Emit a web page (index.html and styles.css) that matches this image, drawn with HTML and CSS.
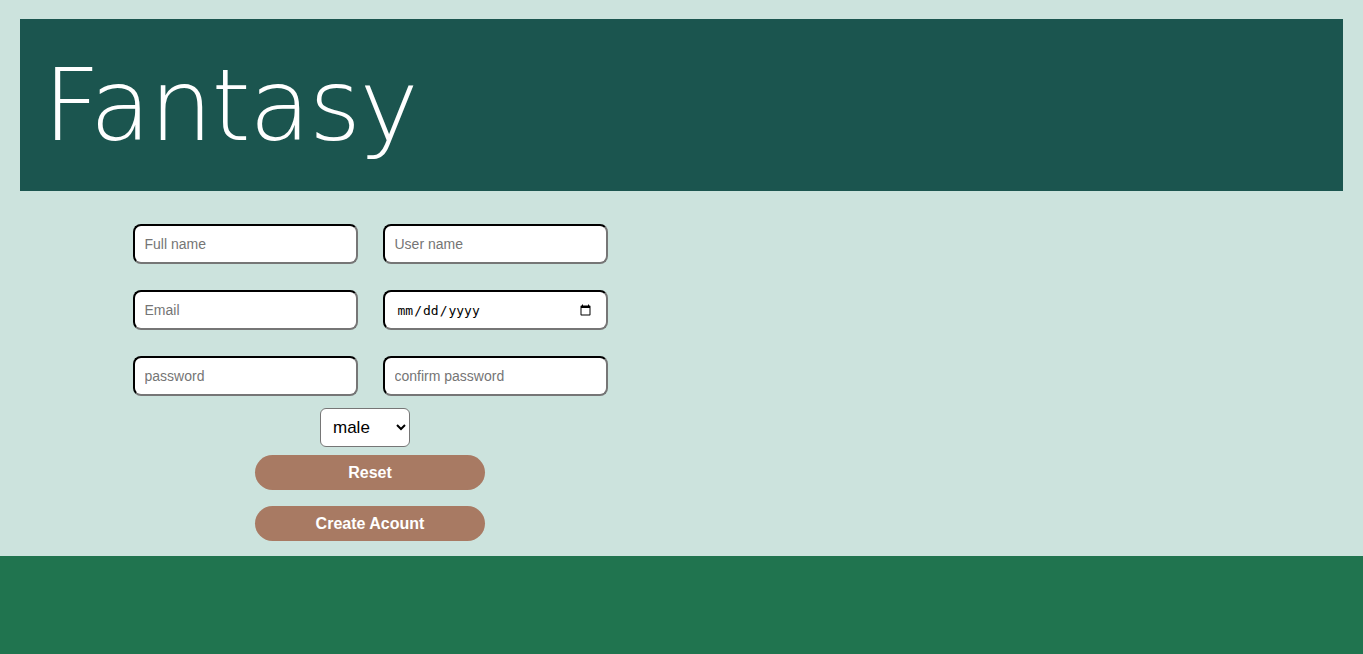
FILE: index.html
```html
<!DOCTYPE html>
<html>
<head>
<meta charset="utf-8">
<link rel="stylesheet" href="styles.css">
</head>
<body>
<header class="banner"><h1 class="title">Fantasy</h1></header>
<main class="content">
  <form class="signup">
    <div class="fields">
      <input class="field" type="text" placeholder="Full name">
      <input class="field" type="text" placeholder="User name">
      <input class="field" type="email" placeholder="Email">
      <input class="field date" type="date">
      <input class="field" type="password" placeholder="password">
      <input class="field" type="password" placeholder="confirm password">
    </div>
    <div class="gender-row">
      <select class="gender"><option>male</option><option>female</option></select>
    </div>
    <div class="actions">
      <button type="reset" class="btn">Reset</button>
      <button type="submit" class="btn">Create Acount</button>
    </div>
  </form>
</main>
<footer class="footer"></footer>
</body>
</html>
```
FILE: styles.css
```css
html, body {
  margin: 0;
  padding: 0;
}
body {
  background: #cce3dd;
  font-family: "Liberation Sans", Arial, sans-serif;
}
.banner {
  margin: 19px 20px 0 20px;
  height: 172px;
  background: #1b554f;
  display: flex;
  align-items: center;
}
.title {
  margin: 0 0 0 23px;
  color: #ffffff;
  font-family: "DejaVu Sans", sans-serif;
  font-weight: 200;
  font-size: 100px;
  letter-spacing: -1.5px;
  line-height: 1;
  transform: translateY(1px);
}
.content {
  padding: 33px 0 15px 133px;
}
.signup {
  width: 474px;
  display: flex;
  flex-direction: column;
  align-items: center;
}
.fields {
  display: grid;
  grid-template-columns: 225px 225px;
  column-gap: 25px;
  row-gap: 26px;
}
.field {
  box-sizing: border-box;
  width: 225px;
  height: 40px;
  border: 2px inset #767676;
  border-top-color: #222;
  border-left-color: #222;
  border-radius: 8px;
  padding: 0 10px;
  background: #fff;
  font-family: "Liberation Sans", Arial, sans-serif;
  font-size: 14px;
  color: #000;
}
.field::placeholder {
  color: #757575;
}
.date {
  font-family: "DejaVu Sans Mono", monospace;
  font-size: 13px;
  padding-left: 12px;
  padding-right: 12px;
}
.gender-row {
  margin-top: 12px;
  width: 100%;
  display: flex;
  justify-content: center;
  padding-right: 10px;
  box-sizing: border-box;
}
.gender {
  width: 90px;
  height: 39px;
  border: 1px solid #767676;
  border-radius: 6px;
  background: #fff;
  font-family: "Liberation Sans", Arial, sans-serif;
  font-size: 17px;
  padding: 0 8px;
  color: #000;
}
.actions {
  margin-top: 8px;
  display: flex;
  flex-direction: column;
  gap: 16px;
  align-items: center;
}
.btn {
  width: 230px;
  height: 35px;
  border: none;
  border-radius: 18px;
  background: #a87a63;
  color: #fff;
  font-family: "Liberation Sans", Arial, sans-serif;
  font-weight: bold;
  font-size: 16px;
  cursor: pointer;
}
.footer {
  background: #20744f;
  height: 98px;
}
```
